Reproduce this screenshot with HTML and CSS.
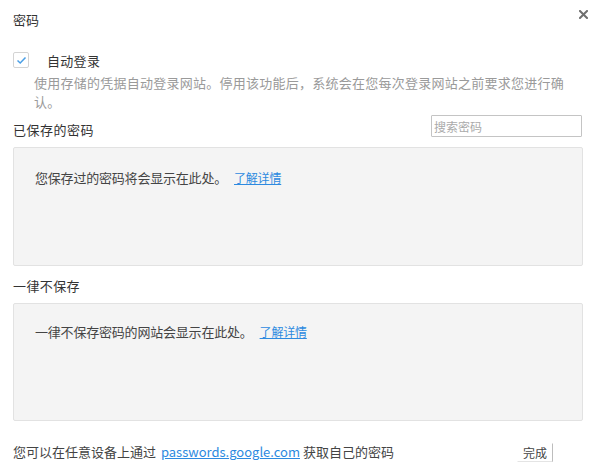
FILE: index.html
```html
<!DOCTYPE html>
<html lang="zh-CN">
<head>
<meta charset="utf-8">
<title>密码</title>
<link rel="stylesheet" href="styles.css">
</head>
<body>
<div class="dialog">
  <div class="header">
    <div class="title">密码</div>
    <div class="close">
      <svg width="9" height="9" viewBox="0 0 9 9"><path d="M1 1L8 8M8 1L1 8" stroke="#6f6f6f" stroke-width="2" stroke-linecap="square"/></svg>
    </div>
  </div>
  <div class="check-row">
    <span class="checkbox">
      <svg width="11" height="9" viewBox="0 0 11 9"><path d="M1.5 4.5L4.2 7L9.5 1.5" fill="none" stroke="#4a9fe6" stroke-width="1.5"/></svg>
    </span>
    <span class="check-label">自动登录</span>
  </div>
  <div class="desc">使用存储的凭据自动登录网站。停用该功能后，系统会在您每次登录网站之前要求您进行确认。</div>
  <div class="section-head">
    <span class="section-title">已保存的密码</span>
    <input class="search" type="text" placeholder="搜索密码">
  </div>
  <div class="box box-saved">
    <span>您保存过的密码将会显示在此处。</span><a class="link" href="#">了解详情</a>
  </div>
  <div class="section-head2">一律不保存</div>
  <div class="box box-never">
    <span>一律不保存密码的网站会显示在此处。</span><a class="link" href="#">了解详情</a>
  </div>
  <div class="footer">
    <div class="footer-text">您可以在任意设备上通过 <a class="link" href="#">passwords.google.com</a> 获取自己的密码</div>
    <button class="done">完成</button>
  </div>
</div>
</body>
</html>
```

FILE: styles.css
```css
* { box-sizing: border-box; }
html, body { margin: 0; padding: 0; background: #fff; }
body {
  font-family: "Noto Sans CJK SC", "Microsoft YaHei", "Noto Sans", sans-serif;
  font-size: 13px;
  color: #333;
}
.dialog {
  width: 593px;
  height: 469px;
  padding: 0 10px 0 13px;
}
.header {
  display: flex;
  justify-content: space-between;
  height: 41px;
}
.title {
  margin-top: 10px;
  line-height: 20px;
  font-size: 13px;
  color: #333;
}
.close {
  margin-top: 10px;
  margin-right: -5px;
  width: 9px;
  height: 9px;
  display: flex;
}
.check-row {
  display: flex;
  align-items: center;
  height: 16px;
  margin-top: 11px;
}
.checkbox {
  width: 16px;
  height: 16px;
  border: 1px solid #d4d4d4;
  border-radius: 2px;
  display: flex;
  align-items: center;
  justify-content: center;
  background: #fff;
}
.check-label {
  margin-left: 18px;
  color: #333;
  letter-spacing: 0.3px;
}
.desc {
  margin-top: 5px;
  padding-left: 21px;
  width: 557px;
  line-height: 19px;
  color: #9a9a9a;
  letter-spacing: 0.25px;
}
.section-head {
  display: flex;
  justify-content: space-between;
  align-items: flex-end;
  height: 26px;
  margin-top: 0;
}
.section-title {
  line-height: 20px;
  letter-spacing: 0.5px;
  color: #333;
  margin-bottom: -3px;
}
.search {
  width: 151px;
  height: 22px;
  border: 1px solid #c4c4c4;
  border-radius: 1px;
  padding: 0 4px 0 2px;
  font-family: inherit;
  font-size: 12px;
  color: #333;
  outline: none;
  margin-right: 1px;
}
.search::placeholder { color: #aaa; }
.box {
  margin-top: 10px;
  width: 570px;
  background: #f4f4f4;
  border: 1px solid #e2e2e2;
  border-radius: 2px;
  padding-left: 21px;
  color: #444;
  letter-spacing: -0.2px;
}
.box-saved {
  height: 119px;
  padding-top: 20px;
  line-height: 20px;
}
.box-never {
  margin-top: 7px;
  height: 118px;
  padding-top: 18px;
  line-height: 20px;
}
.link {
  color: #2d8ae0;
  text-decoration: underline;
  margin-left: 7px;
  font-size: 12px;
}
.section-head2 {
  margin-top: 10px;
  line-height: 20px;
  letter-spacing: 0.4px;
  color: #333;
}
.footer {
  display: flex;
  justify-content: space-between;
  align-items: center;
  margin-top: 21px;
  height: 20px;
}
.footer-text {
  line-height: 20px;
  color: #444;
}
.footer-text .link { margin-left: 2px; font-size: 13px; }
.done {
  margin-right: 30px;
  width: 36px;
  height: 19px;
  padding: 0;
  font-family: inherit;
  font-size: 12px;
  color: #444;
  background: #fff;
  border: 1px solid #fff;
  border-right-color: #bdbdbd;
  border-bottom-color: #e4e4e4;
  border-radius: 0;
}
```
